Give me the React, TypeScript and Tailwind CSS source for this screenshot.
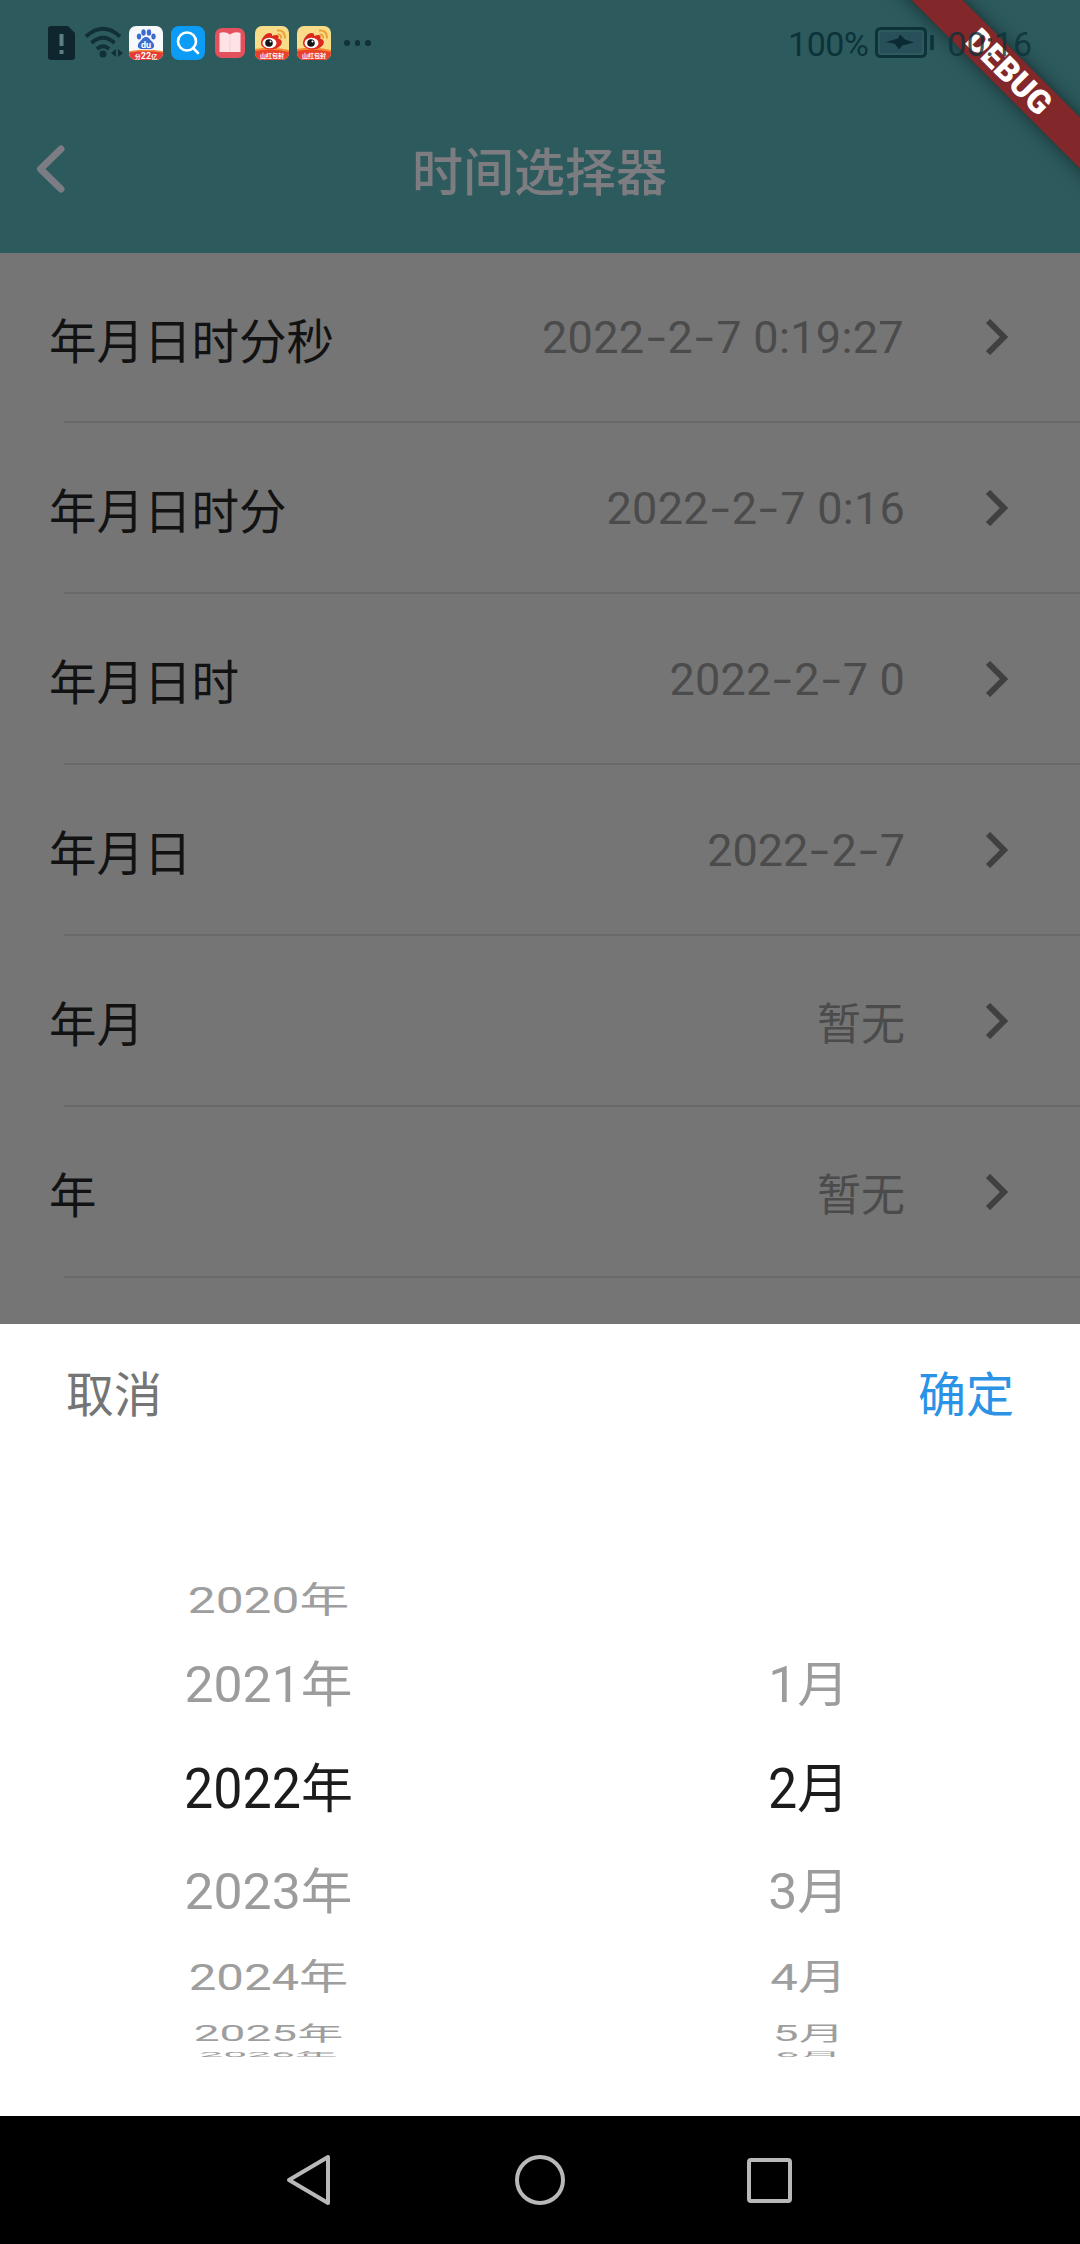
import { Fragment } from "react";

const rows = [
  { label: "年月日时分秒", value: "2022-2-7 0:19:27", tracking: "tracking-[0.35px] -ml-1 mr-[1px]" },
  { label: "年月日时分", value: "2022-2-7 0:16", tracking: "tracking-[0.25px]" },
  { label: "年月日时", value: "2022-2-7 0", tracking: "tracking-[0.15px]" },
  { label: "年月日", value: "2022-2-7", tracking: "tracking-normal" },
  { label: "年月", value: "暂无", tracking: "tracking-normal" },
  { label: "年", value: "暂无", tracking: "tracking-normal" },
];

// Box height and glyph scale of each wheel slot, from top to bottom.
const slots = [
  { box: "h-[75px]", text: "scale-x-[0.955] scale-y-[0.69] text-[#9e9e9e]" },
  { box: "h-[96px]", text: "scale-x-[0.995] scale-y-[0.93] text-[#9c9c9c]" },
  { box: "h-[112px]", text: "scale-y-[1.03] text-[#1c1c1c]" },
  { box: "h-[94px]", text: "scale-x-[0.995] scale-y-[0.93] text-[#9c9c9c]" },
  { box: "h-[76px]", text: "scale-x-[0.945] scale-y-[0.69] text-[#9e9e9e]" },
  { box: "h-[35px]", text: "scale-x-[0.885] scale-y-[0.39] text-[#9e9e9e]" },
  { box: "h-[6px] overflow-hidden", text: "scale-x-[0.82] scale-y-[0.13] translate-y-[1px] text-[#9e9e9e]" },
];

function SimIcon() {
  return (
    <svg width="27" height="34" viewBox="0 0 27 34">
      <path d="M3 0h17l7 7v24a3 3 0 0 1-3 3H3a3 3 0 0 1-3-3V3a3 3 0 0 1 3-3z" fill="#10262f" />
      <path d="M13.5 8v12M13.5 24v4" stroke="#5d7f82" strokeWidth="4" />
    </svg>
  );
}

function WifiIcon() {
  return (
    <svg width="38" height="34" viewBox="0 0 38 34" fill="none" stroke="#12303a" strokeWidth="4">
      <path d="M1 10.500Q18 -5 35 10.500" />
      <path d="M6.500 17Q18 6.500 29.500 17" />
      <path d="M12 23Q18 17.500 24 23" />
      <circle cx="18" cy="28" r="3.500" fill="#12303a" stroke="none" />
      <path d="M31 23v8l-5-4zM33 23v8l5-4z" fill="#12303a" stroke="none" />
    </svg>
  );
}

function BaiduIcon() {
  return (
    <svg width="34" height="34" viewBox="0 0 34 34">
      <clipPath id="bd"><rect width="34" height="34" rx="7" /></clipPath>
      <g clipPath="url(#bd)">
        <rect width="34" height="34" fill="#f7f9fc" />
        <g fill="#3c6bd0">
          <ellipse cx="10" cy="10.500" rx="2.200" ry="3" />
          <ellipse cx="14.500" cy="6.500" rx="2.200" ry="3.200" />
          <ellipse cx="20" cy="6.500" rx="2.200" ry="3.200" />
          <ellipse cx="24.500" cy="10.500" rx="2.200" ry="3" />
          <path d="M17 11c3 0 4 2.500 6 4.500 3.500 3 2.500 7.500-1.500 7.500h-9c-4 0-5-4.500-1.500-7.500 2-2 3-4.500 6-4.500z" />
        </g>
        <path d="M0 26Q17 23 34 26V34H0z" fill="#e73a35" />
        <path d="M0 26Q17 23 34 26" stroke="#f08a3c" strokeWidth="1.500" fill="none" />
        <text x="17" y="22" fontSize="9" fontWeight="700" fill="#fff" textAnchor="middle" fontFamily="Roboto, sans-serif">du</text>
        <text x="17" y="33" fontSize="9" fontWeight="700" fill="#fff" textAnchor="middle" fontFamily="Roboto, 'Noto Sans CJK SC', sans-serif">
          <tspan fontSize="6">分</tspan>22<tspan fontSize="6">亿</tspan>
        </text>
      </g>
    </svg>
  );
}

function SearchIcon() {
  return (
    <svg width="34" height="34" viewBox="0 0 34 34" fill="none">
      <rect width="34" height="34" rx="8" fill="#0c9cf5" />
      <circle cx="16" cy="15.500" r="9" stroke="#fff" strokeWidth="2.600" />
      <path d="M22 22l5 5" stroke="#fff" strokeWidth="2.600" strokeLinecap="round" />
    </svg>
  );
}

function BookIcon() {
  return (
    <svg width="30" height="30" viewBox="0 0 30 30">
      <rect width="30" height="30" rx="7" fill="#e4515d" />
      <path d="M4.500 5Q10 3 15 6.500Q20 3 25.500 5V24H4.500z" fill="#fde3e6" />
      <path d="M15 6.500v17.500" stroke="#f8cfd4" strokeWidth="1" />
    </svg>
  );
}

function WeiboIcon() {
  return (
    <svg width="34" height="34" viewBox="0 0 34 34">
      <clipPath id="wb"><rect width="34" height="34" rx="7" /></clipPath>
      <g clipPath="url(#wb)">
        <rect width="34" height="34" fill="#f9dc8a" />
        <path d="M0 24Q17 21 34 25V34H0z" fill="#e8432a" />
        <path d="M0 24Q17 21 34 25" stroke="#f58a35" strokeWidth="2" fill="none" />
        <path d="M6 17C6 11 13 5 16.500 7.500c1.200 1 .4 2.500.4 2.500s5-2.500 6.500 0c.8 1.500-.4 2.500-.4 2.500 4 1 5 4 2.500 7S18 24 14 23.500 6 21 6 17z" fill="#dd2a1e" />
        <ellipse cx="14.500" cy="17" rx="7" ry="5.300" fill="#fff" />
        <circle cx="14" cy="17" r="3.800" fill="#151515" />
        <circle cx="15.500" cy="15.500" r="1" fill="#fff" />
        <path d="M22.500 8.500q4-.5 3.600 4M22 4.500q8-1 8 8" stroke="#eda236" strokeWidth="2" fill="none" />
        <text x="17" y="32" fontSize="6" fontWeight="700" fill="#fff" textAnchor="middle" fontFamily="'Noto Sans CJK SC', sans-serif">山红包封</text>
      </g>
    </svg>
  );
}

function BatteryIcon() {
  return (
    <svg width="60" height="32" viewBox="0 0 60 32" fill="none">
      <rect x="1.500" y="1.500" width="49" height="28" rx="4" stroke="#0d323a" strokeWidth="3" />
      <rect x="5" y="5" width="42" height="21" rx="1" fill="#28505a" />
      <path d="M11 15l12-3.500 2-4 5 5 9 3-12 3-3 4-4-5.500z" fill="#0b2a33" />
      <path d="M57 8v15" stroke="#0d323a" strokeWidth="3.500" />
    </svg>
  );
}

function DateValue({ text, tracking }: { text: string; tracking: string }) {
  const parts = text.split("-");
  if (parts.length === 1) {
    return <span className="pt-[9px] text-[44px] leading-[60px] text-[#4b4b4b]">{text}</span>;
  }
  return (
    <span className={`pt-[2px] text-[45px] leading-[60px] text-[#4b4b4b] ${tracking}`}>
      {parts.map((part, i) => (
        <Fragment key={i}>
          {i > 0 && <span className="inline-block w-[23px] scale-x-[1.500] text-center">-</span>}
          {part}
        </Fragment>
      ))}
    </span>
  );
}

function WheelColumn({ values, unit }: { values: string[]; unit: string }) {
  return (
    <div className="flex flex-1 flex-col pr-[3px]">
      {values.map((v, i) => (
        <div key={i} className={`flex shrink-0 items-center justify-center ${slots[i].box}`}>
          {v && (
            <span className={`shrink-0 whitespace-nowrap text-[52px] leading-[60px] ${slots[i].text}`}>
              <span className="inline-block origin-[50%_78%] scale-y-[1.05]">{v}</span>
              {unit}
            </span>
          )}
        </div>
      ))}
    </div>
  );
}

export default function App() {
  return (
    <div className="relative flex h-[2244px] w-[1080px] flex-col overflow-hidden bg-[#757575] font-[Roboto,'Noto_Sans_CJK_SC',sans-serif]">
      <header className="flex h-[253px] shrink-0 flex-col bg-[#2c5a5d]">
        <div className="relative z-10 flex h-[86px] items-center justify-between pr-[48px] pl-[48px]">
          <div className="flex items-center">
            <SimIcon />
            <div className="ml-[10px]"><WifiIcon /></div>
            <div className="ml-[6px] flex items-center gap-[8px]">
              <BaiduIcon />
              <SearchIcon />
              <div className="mx-[2px]"><BookIcon /></div>
              <WeiboIcon />
              <WeiboIcon />
            </div>
            <div className="ml-[13px] flex gap-[5px]">
              <i className="size-[5.500px] rounded-full bg-[#12303a]" />
              <i className="size-[5.500px] rounded-full bg-[#12303a]" />
              <i className="size-[5.500px] rounded-full bg-[#12303a]" />
            </div>
          </div>
          <div className="flex items-center text-[34px] leading-[40px] text-[#0d323a]">
            <span className="mr-[7px] pt-[2px] tracking-[-0.5px]">100%</span>
            <BatteryIcon />
            <span className="ml-[12px] pt-[2px] opacity-80">00:16</span>
          </div>
        </div>
        <div className="grid h-[167px] grid-cols-[1fr_auto_1fr] items-center pl-[35px]">
          <svg className="-mt-[2px]" width="32" height="50" viewBox="0 0 32 50" fill="none" stroke="#7c7c84" strokeWidth="7" strokeLinecap="round" strokeLinejoin="round">
            <path d="M26 5L5.500 25L26 45" />
          </svg>
          <h1 className="-ml-[36px] pt-[8px] text-[51px] leading-[60px] font-medium text-[#7d7c81]">时间选择器</h1>
        </div>
      </header>

      <div className="absolute top-0 right-0 h-[200px] w-[240px] overflow-hidden">
        <div className="absolute top-[53.500px] left-[19px] flex h-[36px] w-[300px] rotate-45 items-center justify-center bg-[#82272a] text-[33px] font-black text-white shadow-[0_0_18px_rgba(0,0,0,0.5)]">
          DEBUG
        </div>
      </div>

      <main className="flex flex-col">
        {rows.map((r) => (
          <div key={r.label} className="flex h-[171px] shrink-0 flex-col first:h-[170px]">
            <div className="flex flex-1 items-center pr-[71px] pl-[49px]">
              <span className="flex-1 pt-[11px] text-[47.500px] leading-[60px] text-[#121212]">{r.label}</span>
              <DateValue text={r.value} tracking={r.tracking} />
              <svg className="ml-[80px]" width="24" height="36" viewBox="0 0 24 36" fill="none" stroke="#404040" strokeWidth="6">
                <path d="M3 2L19 18L3 34" />
              </svg>
            </div>
            <div className="ml-[64px] h-[2px] bg-[#696969]" />
          </div>
        ))}
      </main>

      <section className="mt-auto flex h-[792px] shrink-0 flex-col bg-white">
        <div className="flex h-[139px] shrink-0 items-center justify-between pt-[5px] pr-[66px] pl-[66px] text-[48px] leading-[60px]">
          <button className="text-[#757575]">取消</button>
          <button className="text-[#2b93e6]">确定</button>
        </div>
        <div className="flex pt-[100px]">
          <WheelColumn values={["2020", "2021", "2022", "2023", "2024", "2025", "2026"]} unit="年" />
          <WheelColumn values={["", "1", "2", "3", "4", "5", "6"]} unit="月" />
        </div>
      </section>

      <nav className="flex h-[128px] shrink-0 items-center bg-black pl-[286px]">
        <svg width="46" height="52" viewBox="0 0 46 52" fill="none" stroke="#b8b8b8" strokeWidth="4" strokeLinejoin="round">
          <path d="M42 3V49L3 26z" />
        </svg>
        <div className="ml-[183px] size-[50px] rounded-full border-4 border-[#b8b8b8]" />
        <div className="ml-[182px] size-[45px] rounded-[4px] border-4 border-[#b8b8b8]" />
      </nav>
    </div>
  );
}
